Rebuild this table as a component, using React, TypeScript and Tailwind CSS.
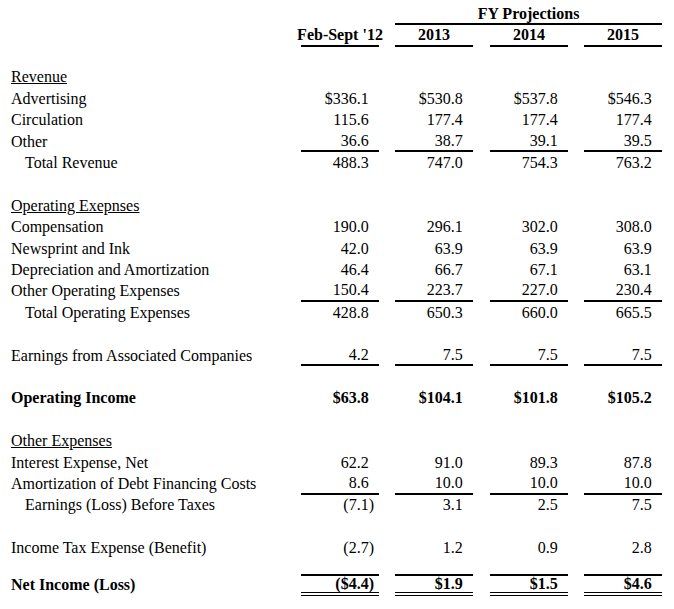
type Kind = "title" | "item" | "total" | "bold" | "blank";

interface Line {
  label?: string;
  values?: string[];
  kind: Kind;
  rule?: boolean;
}

const LINES: Line[] = [
  { label: "Revenue", kind: "title" },
  { label: "Advertising", kind: "item", values: ["$336.1", "$530.8", "$537.8", "$546.3"] },
  { label: "Circulation", kind: "item", values: ["115.6", "177.4", "177.4", "177.4"] },
  { label: "Other", kind: "item", values: ["36.6", "38.7", "39.1", "39.5"], rule: true },
  { label: "Total Revenue", kind: "total", values: ["488.3", "747.0", "754.3", "763.2"] },
  { kind: "blank" },
  { label: "Operating Exepnses", kind: "title" },
  { label: "Compensation", kind: "item", values: ["190.0", "296.1", "302.0", "308.0"] },
  { label: "Newsprint and Ink", kind: "item", values: ["42.0", "63.9", "63.9", "63.9"] },
  { label: "Depreciation and Amortization", kind: "item", values: ["46.4", "66.7", "67.1", "63.1"] },
  { label: "Other Operating Expenses", kind: "item", values: ["150.4", "223.7", "227.0", "230.4"], rule: true },
  { label: "Total Operating Expenses", kind: "total", values: ["428.8", "650.3", "660.0", "665.5"] },
  { kind: "blank" },
  { label: "Earnings from Associated Companies", kind: "item", values: ["4.2", "7.5", "7.5", "7.5"], rule: true },
  { kind: "blank" },
  { label: "Operating Income", kind: "bold", values: ["$63.8", "$104.1", "$101.8", "$105.2"] },
  { kind: "blank" },
  { label: "Other Expenses", kind: "title" },
  { label: "Interest Expense, Net", kind: "item", values: ["62.2", "91.0", "89.3", "87.8"] },
  { label: "Amortization of Debt Financing Costs", kind: "item", values: ["8.6", "10.0", "10.0", "10.0"], rule: true },
  { label: "Earnings (Loss) Before Taxes", kind: "total", values: ["(7.1)", "3.1", "2.5", "7.5"] },
  { kind: "blank" },
  { label: "Income Tax Expense (Benefit)", kind: "item", values: ["(2.7)", "1.2", "0.9", "2.8"] },
];

const NET_INCOME = ["($4.4)", "$1.9", "$1.5", "$4.6"];

// gaps between the four number columns
const COL_GAP = ["", "ml-[16px]", "ml-[17px]", "ml-[16px]"];

function Amount({ value }: { value: string }) {
  // positive numbers keep room for the closing paren so decimals line up
  const neg = value.endsWith(")");
  return (
    <span className="whitespace-nowrap">
      {value}
      {!neg && <span className="invisible">)</span>}
    </span>
  );
}

function TableRow({ line }: { line: Line }) {
  if (line.kind === "blank") return <div className="h-[21.4px]" />;
  const bold = line.kind === "bold";
  return (
    <div className={`flex h-[21.4px] leading-[18px] ${bold ? "font-bold" : ""}`}>
      <div className={`w-[290px] flex items-center whitespace-nowrap ${line.kind === "total" ? "pl-[14px]" : ""}`}>
        <span className={line.kind === "title" ? "underline" : ""}>{line.label}</span>
      </div>
      {line.values?.map((v, i) => (
        <div
          key={i}
          className={`w-[78px] flex items-center justify-end pr-[5px] ${COL_GAP[i]} ${line.rule ? "border-b-2 border-black" : ""}`}
        >
          <Amount value={v} />
        </div>
      ))}
    </div>
  );
}

export default function App() {
  return (
    <div className="w-[674px] h-[609px] bg-white text-black text-[16px] pl-[11px] pt-[4px] font-['Liberation_Serif','Times_New_Roman',serif]">
      {/* Header */}
      <div className="flex h-[21.4px] leading-[18px] font-bold">
        <div className="w-[290px]" />
        <div className="w-[78px]" />
        <div className="ml-[16px] w-[267px] flex items-center justify-center border-b-2 border-black">
          FY Projections
        </div>
      </div>
      <div className="flex h-[21.4px] leading-[18px] font-bold">
        <div className="w-[290px]" />
        {["Feb-Sept '12", "2013", "2014", "2015"].map((h, i) => (
          <div
            key={h}
            className={`w-[78px] flex items-center justify-center whitespace-nowrap border-b-2 border-black ${COL_GAP[i]}`}
          >
            {h}
          </div>
        ))}
      </div>

      <div className="h-[20px]" />

      {LINES.map((line, i) => (
        <TableRow key={i} line={line} />
      ))}

      {/* Net income with double underline */}
      <div className="flex h-[22px] mt-[15px] leading-[16px] font-bold">
        <div className="w-[290px] flex items-center">Net Income (Loss)</div>
        {NET_INCOME.map((v, i) => (
          <div
            key={i}
            className={`w-[78px] flex items-center justify-end pr-[5px] border-t-2 border-b-4 border-black [border-bottom-style:double] ${COL_GAP[i]}`}
          >
            <Amount value={v} />
          </div>
        ))}
      </div>
    </div>
  );
}
